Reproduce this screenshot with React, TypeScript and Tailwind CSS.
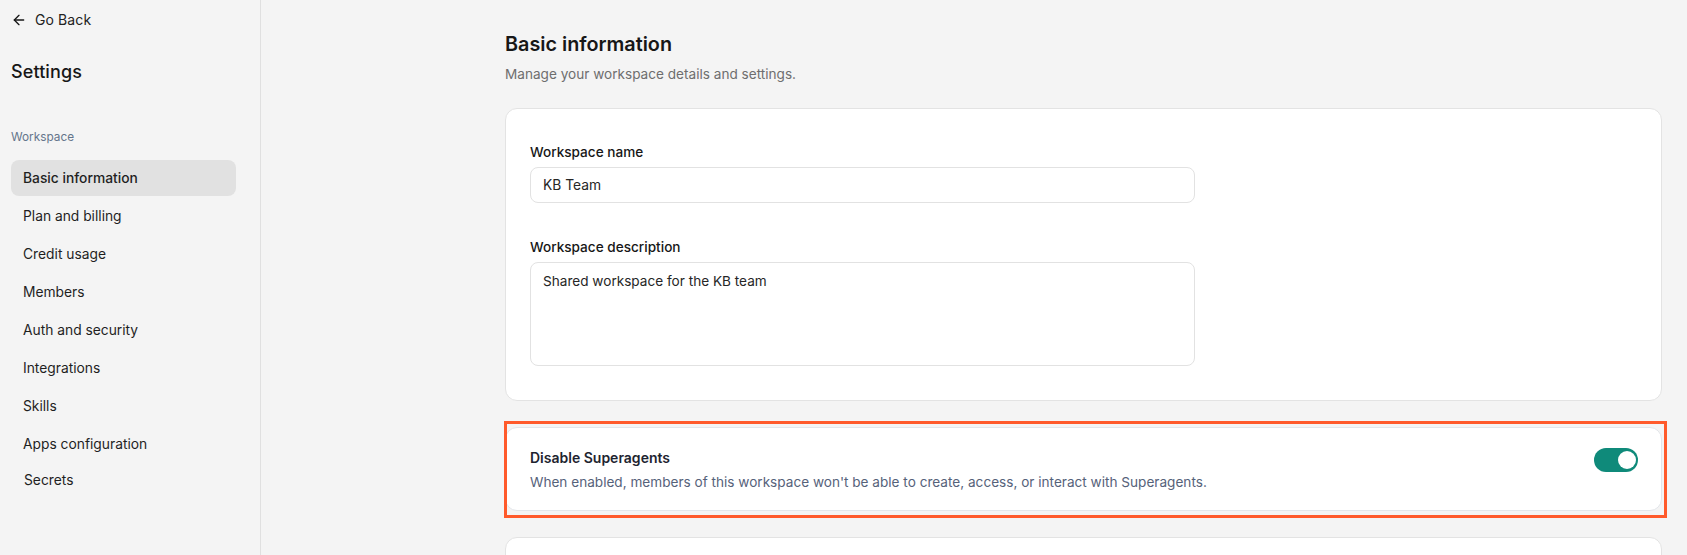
import { ArrowLeft } from "lucide-react";

const items = [
  "Basic information",
  "Plan and billing",
  "Credit usage",
  "Members",
  "Auth and security",
  "Integrations",
  "Skills",
  "Apps configuration",
];

const sans = "font-['Inter','Liberation_Sans',sans-serif]";

export default function App() {
  return (
    <div className={`flex h-[555px] w-full overflow-hidden bg-[#f4f4f4] text-[#171717] ${sans}`}>
      <aside className="w-[261px] shrink-0 border-r border-[#e0e0e0] pl-[11px] pr-[24px]">
        <div className="mt-[10px] flex h-[20px] items-center">
          <ArrowLeft className="h-[16px] w-[16px] text-[#171717]" strokeWidth={2} />
          <span className="ml-[8px] text-[14px] leading-[20px] tracking-[0.1px] text-[#222222]">Go Back</span>
        </div>
        <h2 className="mt-[30px] text-[18px] leading-[24px] font-medium tracking-[0.1px] text-[#171717]">Settings</h2>
        <p className="mt-[45px] text-[11.8px] leading-[16px] text-[#64748b]">Workspace</p>
        <nav className="mt-[15px] flex flex-col gap-[2px]">
          {items.map((item, i) => (
            <div
              key={item}
              className={`flex h-[36px] items-center rounded-[8px] px-[12px] pt-[1px] text-[13.8px] text-[#1f1f1f] ${
                i === 0 ? "bg-[#e1e1e1] font-medium" : ""
              }`}
            >
              {item}
            </div>
          ))}
          <div className="-mt-[2px] flex h-[36px] items-center px-[13px] pt-[1px] text-[13.8px] text-[#1f1f1f]">
            Secrets
          </div>
        </nav>
      </aside>
      <main className="flex-1 pl-[244px] pr-[25px]">
        <h1 className="mt-[30px] text-[19.8px] leading-[28px] font-semibold text-[#171717]">Basic information</h1>
        <p className="mt-[6px] text-[13.6px] leading-[20px] text-[#6e6e6e]">
          Manage your workspace details and settings.
        </p>
        <section className="mt-[24px] h-[293px] rounded-[12px] border border-[#e3e3e3] bg-white px-[24px] pt-[33px]">
          <label className="block text-[13.6px] leading-[20px] font-medium text-[#171717]">Workspace name</label>
          <div className="mt-[5px] flex h-[36px] w-[665px] items-center rounded-[8px] border border-[#e2e2e2] px-[12px] pt-[1px] text-[13.8px] text-[#262626]">
            KB Team
          </div>
          <label className="mt-[34px] block text-[13.6px] leading-[20px] font-medium text-[#171717]">Workspace description</label>
          <div className="mt-[5px] h-[104px] w-[665px] rounded-[8px] border border-[#e2e2e2] px-[12px] pt-[8px] text-[13.6px] leading-[20px] text-[#262626]">
            Shared workspace for the KB team
          </div>
        </section>
        <section className="relative mt-[26px] flex h-[84px] items-start justify-between rounded-[12px] border border-[#e3e6ea] bg-white pr-[23px] pl-[24px] pt-[20px]">
          <div>
            <h3 className="text-[14px] leading-[20px] font-semibold text-[#1e2430]">Disable Superagents</h3>
            <p className="mt-[4px] text-[13.6px] leading-[20px] text-[#56627a]">
              When enabled, members of this workspace won't be able to create, access, or interact with Superagents.
            </p>
          </div>
          <div className="flex h-[24px] w-[44px] items-center justify-end rounded-full bg-[#0f8a7a] pr-[2px]">
            <div className="h-[18px] w-[18px] rounded-full bg-white" />
          </div>
          <div className="pointer-events-none absolute -top-[7px] -right-[6px] -bottom-[8px] -left-[2px] border-[3px] border-[#ff5a2b]" />
        </section>
        <section className="mt-[26px] h-[120px] rounded-[12px] border border-[#e3e3e3] bg-white" />
      </main>
    </div>
  );
}
